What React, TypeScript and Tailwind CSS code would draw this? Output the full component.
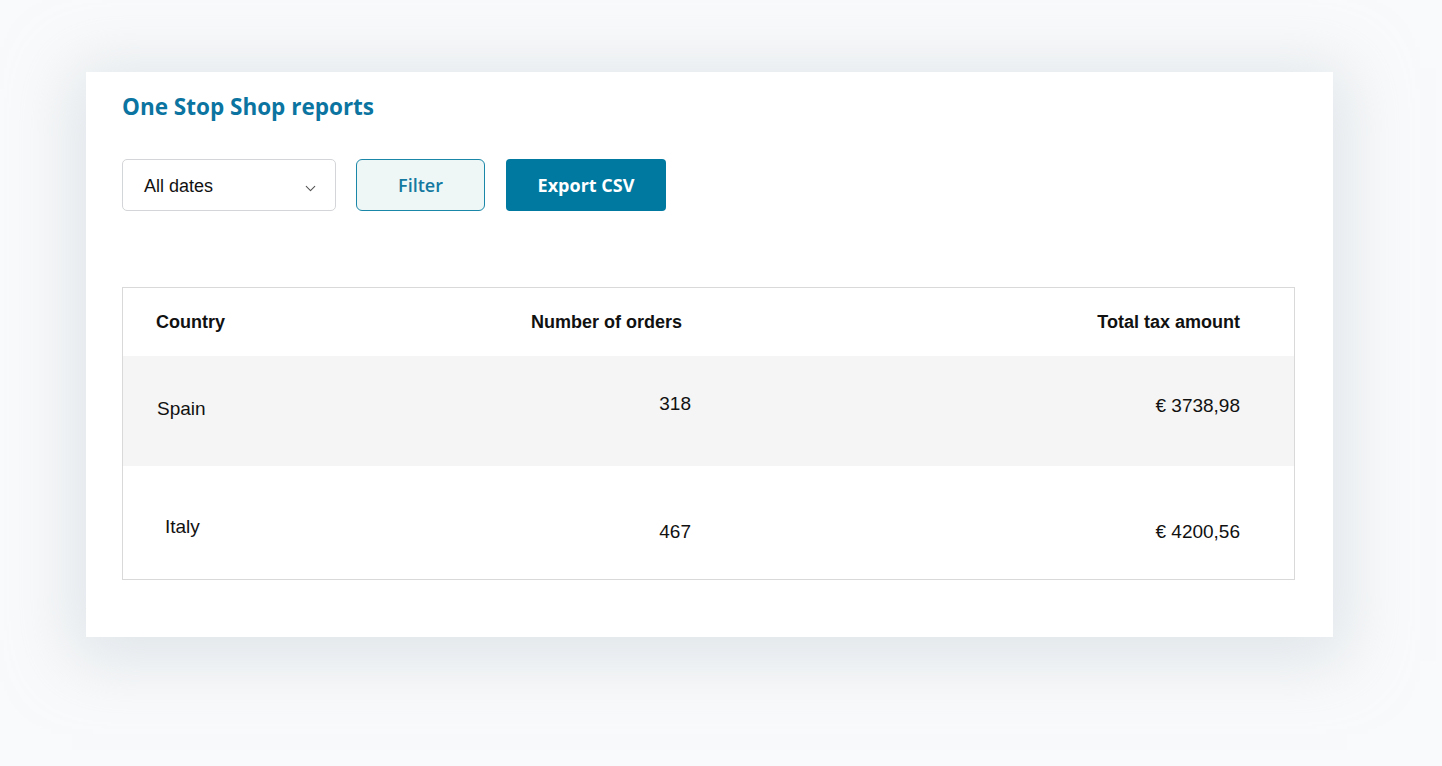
import React from 'react';
import { ChevronDown } from 'lucide-react';

const rows = [
  { country: 'Spain', orders: '318', total: '€ 3738,98', h: 'h-[110px]', bg: 'bg-[#f5f5f5]', cy: 'pt-[42px]', oy: 'pt-[37px]', ty: 'pt-[39px]' },
  { country: 'Italy', orders: '467', total: '€ 4200,56', h: 'h-[113px]', bg: 'bg-white', cy: 'pt-[50px] pl-[8px]', oy: 'pt-[55px]', ty: 'pt-[55px]' },
];

export default function App() {
  return (
    <div
      className="h-[766px] w-full overflow-hidden bg-[#f9fafb] pl-[86px] pt-[72px]"
      style={{ fontFamily: '"Liberation Sans", Arial, sans-serif' }}
    >
      <div className="flex h-[565px] w-[1247px] flex-col bg-white pl-[36px] pr-[38px] pt-[20px] shadow-[0_10px_60px_14px_rgba(200,210,218,0.5)]">
        <h1
          className="text-[22.5px] font-bold leading-[30px] text-[#0b74a0]"
          style={{ fontFamily: '"Open Sans", sans-serif' }}
        >
          One Stop Shop reports
        </h1>

        <div className="mt-[37px] flex items-center">
          <div className="flex h-[52px] w-[214px] items-center justify-between rounded-[5px] border border-[#d3d5d8] bg-white pl-[21px] pr-[16px] pt-[3px]">
            <span className="text-[18px] text-[#111]">All dates</span>
            <ChevronDown size={17} strokeWidth={1.5} className="mt-[4px] text-[#555]" />
          </div>
          <button
            className="ml-[20px] h-[52px] w-[129px] rounded-[6px] border border-[#1a87a8] bg-[#eff6f6] pt-[1px] text-[18px] font-semibold text-[#1479a0]"
            style={{ fontFamily: '"Open Sans", sans-serif' }}
          >
            Filter
          </button>
          <button
            className="ml-[21px] h-[52px] w-[160px] rounded-[4px] bg-[#0079a1] pt-[1px] text-[18px] font-bold text-white"
            style={{ fontFamily: '"Open Sans", sans-serif' }}
          >
            Export CSV
          </button>
        </div>

        <div className="mt-[76px] w-[1173px] border border-[#d9d9d9]">
          <div className="flex h-[68px] items-center pl-[33px] pr-[54px] text-[18px] font-bold text-[#111]">
            <div className="w-[375px]">Country</div>
            <div className="w-[160px]">Number of orders</div>
            <div className="flex-1 text-right">Total tax amount</div>
          </div>
          {rows.map((r) => (
            <div key={r.country} className={`flex items-start pl-[34px] pr-[54px] text-[19px] leading-[22px] text-[#111] ${r.h} ${r.bg}`}>
              <div className={`w-[374px] ${r.cy}`}>{r.country}</div>
              <div className={`w-[160px] text-right ${r.oy}`}>{r.orders}</div>
              <div className={`flex-1 text-right ${r.ty}`}>{r.total}</div>
            </div>
          ))}
        </div>
      </div>
    </div>
  );
}
